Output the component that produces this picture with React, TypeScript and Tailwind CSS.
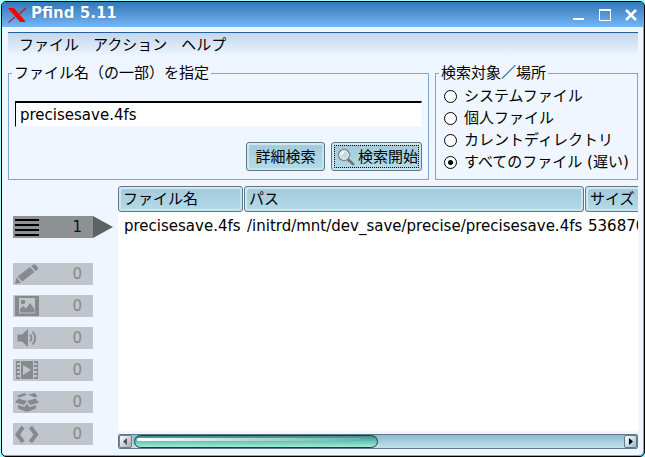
import React, { useState } from 'react';

const menus = ['ファイル', 'アクション', 'ヘルプ'];

const places = ['システムファイル', '個人ファイル', 'カレントディレクトリ', 'すべてのファイル (遅い)'];

const columns = [
  { name: 'ファイル名', width: 'w-[126px]' },
  { name: 'パス', width: 'w-[341px]' },
  { name: 'サイズ', width: 'w-[100px]' },
];

const files = [
  { name: 'precisesave.4fs', path: '/initrd/mnt/dev_save/precise/precisesave.4fs', size: '536870' },
];

const buttonLook =
  'rounded-[3px] border border-[#5d7688] bg-linear-to-b from-[#a0c9db] to-[#b4dbe7] shadow-[inset_2px_2px_1px_#d3e9f1,inset_-2px_-2px_1px_#c4e6ef]';

const PencilIcon = () => (
  <svg className="w-6 h-[22px]" viewBox="0 0 24 22" fill="currentColor">
    <path d="m0 21 1.500-6.500L6 19.500Z" />
    <path d="M2.500 13.500 15 4l4.300 5L7.300 18.600Z" />
    <path d="m16.300 3.100 2.200-1.700q1-.7 2 .4l2.300 2.800q.7 1-.2 1.800l-2.100 1.800Z" />
  </svg>
);

const PictureIcon = () => (
  <svg className="w-6 h-[22px]" viewBox="0 0 24 22" fill="currentColor">
    <path fillRule="evenodd" d="M0 1h24v20H0ZM4 3v15.500h16V3Z" />
    <path d="M5 17.500V14l3-3 3 2.500L15 8l4.500 6v3.500Z" />
    <circle cx="8" cy="7" r="2.300" />
  </svg>
);

const SoundIcon = () => (
  <svg className="w-6 h-[22px]" viewBox="0 0 24 22" fill="none" stroke="currentColor" strokeWidth="1.800">
    <path fill="currentColor" stroke="none" d="M2.500 7.500H7l6-5.500v18l-6-5.500H2.500Z" />
    <path d="M15 7.500q3 3.500 0 7M17.500 4.500q5.500 6.500 0 13" />
  </svg>
);

const FilmIcon = () => (
  <svg className="w-6 h-[22px]" viewBox="0 0 24 22" fill="currentColor">
    <path fillRule="evenodd" d="M6 2h12v18H6ZM8 6v10l8-5Z" />
    <path d="M1 2h4v2H1ZM1 6h4v2H1ZM1 10h4v2H1ZM1 14h4v2H1ZM1 18h4v2H1ZM19 2h4v2h-4ZM19 6h4v2h-4ZM19 10h4v2h-4ZM19 14h4v2h-4ZM19 18h4v2h-4Z" />
    <path d="M1 2h1v18H1ZM22 2h1v18h-1Z" />
  </svg>
);

const BoxIcon = () => (
  <svg className="w-6 h-[22px]" viewBox="0 0 24 22" fill="currentColor">
    <path d="M2 4.500 10 2l1.500 2L4 6.500ZM13 3.500 20 2l2.500 3.500-2.500 1Z" />
    <path d="M3.500 7.500 12 10l-3 4-9-2.500ZM20.500 7.500 12 10l3.500 4 8.500-2.500Z" />
    <path d="M3 14v3.500l9 3.500 9-3.500V14l-6.500 2L12 12.500 9.500 16Z" />
  </svg>
);

const CodeIcon = () => (
  <svg className="w-6 h-[22px]" viewBox="0 0 24 22" fill="none" stroke="currentColor" strokeWidth="4">
    <path d="M8 4 2.500 11.500 8 19M15.500 4l5.500 7.500-5.500 7.500" />
  </svg>
);

const filters = [
  { label: '文書', Icon: PencilIcon },
  { label: '画像', Icon: PictureIcon },
  { label: '音声', Icon: SoundIcon },
  { label: '動画', Icon: FilmIcon },
  { label: 'パッケージ', Icon: BoxIcon },
  { label: 'コード', Icon: CodeIcon },
];

const TitleBar = () => (
  <header className="flex items-center h-[25px] pl-[5px] bg-linear-to-b from-[#3178b8] to-[#74b6f6] text-white">
    <svg className="w-5 h-4 shrink-0" viewBox="0 0 20 16">
      <path fill="#ff0000" d="M1 1h6l12 14h-6Z" />
      <path stroke="#d3122c" strokeWidth="1.300" d="M19 1 12.500 7M8 10l-6.500 5.500" />
    </svg>
    <h1 className="ml-1 pb-1 text-[15px] leading-5 font-bold text-shadow-[0_0_1px_#1d4f80]">Pfind 5.11</h1>
    <div className="flex gap-[2px] ml-auto">
      <button aria-label="最小化" className="w-6 h-6">
        <svg viewBox="0 0 24 24" stroke="#fff" strokeWidth="2"><path d="M5 16h11" /></svg>
      </button>
      <button aria-label="最大化" className="w-6 h-6">
        <svg viewBox="0 0 24 24" fill="none" stroke="#fff">
          <path d="M5.500 7v10.500h11V7" /><path strokeWidth="2" d="M5 7h12" />
        </svg>
      </button>
      <button aria-label="閉じる" className="w-6 h-6">
        <svg viewBox="0 0 24 24" stroke="#fff" strokeWidth="2.500"><path d="m6 7 10 10M16 7 6 17" /></svg>
      </button>
    </div>
  </header>
);

const SearchForm = () => {
  const [query, setQuery] = useState('precisesave.4fs');

  return (
    <fieldset className="grow min-w-0 px-[6px] pb-2 border border-[#7aa5dd]">
      <legend className="-ml-[3px] px-[2px]">
        <label htmlFor="query">ファイル名（の一部）を指定</label>
      </legend>
      <input
        id="query"
        value={query}
        onChange={(e) => setQuery(e.target.value)}
        className="block w-full h-[26px] mt-[19px] pl-1 bg-white border border-t-2 border-[#f4f6fb] border-t-black border-l-black outline-none"
      />
      <div className="flex justify-end gap-[6px] mt-[15px]">
        <button className={`w-[79px] h-[29px] ${buttonLook}`}>詳細検索</button>
        <button className={`w-[91px] h-[29px] p-[2px] ${buttonLook}`}>
          <span className="flex items-center justify-between h-full pl-[2px] border border-dotted border-black">
            <svg className="w-[18px] h-[18px]" viewBox="0 0 18 18">
              <path d="m10.500 11 5.500 5" stroke="#777" strokeWidth="3" strokeLinecap="round" />
              <circle cx="7" cy="7" r="5.500" fill="#c4dce6" stroke="#858b8e" strokeWidth="1.500" />
              <circle cx="7" cy="7" r="4.300" fill="none" stroke="#eef4f6" />
              <path d="M4.500 7q0-2.500 2.500-3" fill="none" stroke="#fff" strokeWidth="1.500" />
            </svg>
            検索開始
          </span>
        </button>
      </div>
    </fieldset>
  );
};

const PlacePicker = () => {
  const [place, setPlace] = useState(places[3]);

  return (
    <fieldset className="shrink-0 w-[203px] pl-2 pb-[5px] border border-[#7aa5dd]">
      <legend className="-ml-[5px] px-[2px]">検索対象／場所</legend>
      <div className="pt-[3px]">
        {places.map((p) => (
          <label key={p} className="flex items-center gap-[7px] h-[22px] whitespace-nowrap">
            <input
              type="radio"
              name="place"
              checked={place === p}
              onChange={() => setPlace(p)}
              className="appearance-none shrink-0 w-[13px] h-[13px] rounded-full border border-black bg-white checked:bg-[radial-gradient(circle,#000_0_2px,#fff_3px)]"
            />
            {p}
          </label>
        ))}
      </div>
    </fieldset>
  );
};

const Sidebar = () => (
  <nav className="shrink-0 w-[100px] mt-[30px]">
    <button aria-label="すべて" className="flex items-center h-[22px] text-[#111]">
      <span className="flex items-center justify-between w-20 h-full pl-[2px] pr-[11px] bg-[#8e9194]">
        <svg className="w-6 h-[22px]" viewBox="0 0 24 22" stroke="#000" strokeWidth="2">
          <path d="M0 4h24M0 9h24M0 14h24M0 19h24" />
        </svg>
        1
      </span>
      <svg className="w-5 h-[22px]" viewBox="0 0 20 22"><path fill="#5f6265" d="m0 0 20 11L0 22Z" /></svg>
    </button>
    <div className="flex flex-col gap-[10px] mt-[25px]">
      {filters.map(({ label, Icon }) => (
        <button
          key={label}
          aria-label={label}
          className="flex items-center justify-between w-20 h-[22px] pl-[2px] pr-[11px] bg-[#c0c4cb] text-[#86898e]"
        >
          <Icon />
          0
        </button>
      ))}
    </div>
  </nav>
);

const ScrollBar = () => (
  <div className="flex items-center h-[15px] mt-[3px] border border-[#63798a] rounded-[2px] bg-linear-to-b from-[#8fb9cf] to-[#bfe3ec]">
    <button aria-label="左へ" className="w-[13px] h-[13px] rounded-[2px] border border-[#777e88] bg-linear-to-br from-white to-[#a9a9ad]">
      <svg viewBox="0 0 11 11"><path fill="#3c5576" d="M7 2v7L3 5.500Z" /></svg>
    </button>
    <div className="grow px-[2px]">
      <div className="w-1/2 h-[13px] rounded-full border border-[#153f40] bg-linear-to-b from-[#3d8d8a] via-[#6cc4b8] to-[#a0eccf]">
        <div className="h-[3px] mt-[2px] ml-[2px] mr-4 rounded-full bg-linear-to-r from-white to-[#62b5aa]"></div>
      </div>
    </div>
    <button aria-label="右へ" className="w-[13px] h-[13px] rounded-[2px] border border-[#63798a] bg-linear-to-br from-white to-[#8fc0d2]">
      <svg viewBox="0 0 11 11"><path fill="#000" d="M4 2v7l4-3.500Z" /></svg>
    </button>
  </div>
);

const Results = () => (
  <div className="grow min-w-0 flex flex-col">
    <div className="grow overflow-hidden bg-white">
      <table className="table-fixed w-[567px] border-collapse text-left whitespace-nowrap">
        <thead>
          <tr>
            {columns.map((c) => (
              <th key={c.name} className={`p-0 font-normal ${c.width}`}>
                <div className={`h-[26px] mr-px pl-1 leading-6 ${buttonLook}`}>{c.name}</div>
              </th>
            ))}
          </tr>
        </thead>
        <tbody>
          {files.map((f) => (
            <tr key={f.path} className="h-[28px]">
              <td className="p-0 pl-[6px]">{f.name}</td>
              <td className="p-0 pl-[3px]">{f.path}</td>
              <td className="p-0 pl-[3px]">{f.size}</td>
            </tr>
          ))}
        </tbody>
      </table>
    </div>
    <ScrollBar />
  </div>
);

const App: React.FC = () => {
  return (
    <div className="flex flex-col min-h-screen pt-px pl-px bg-[#a5ffff] text-[15px] leading-[18px] text-black font-['DejaVu_Sans','Noto_Sans_CJK_JP',sans-serif]">
      <main className="grow flex flex-col border border-black rounded-[5px] overflow-hidden bg-[#eff6ff] shadow-[inset_-1px_-1px_0_#63acf7]">
        <TitleBar />
        <div className="grow flex flex-col mt-[5px] mx-[6px] pb-[7px] border-t border-[#245f9b]">
          <nav className="flex gap-[14px] h-[31px] pt-[3px] pl-[11px] bg-linear-to-b from-[#c3d6ee] to-[#eff6ff] to-75%">
            {menus.map((m) => (
              <button key={m} className="h-[18px]">{m}</button>
            ))}
          </nav>
          <div className="flex gap-[6px]">
            <SearchForm />
            <PlacePicker />
          </div>
          <div className="grow flex gap-[5px] mt-[6px] pl-[5px]">
            <Sidebar />
            <Results />
          </div>
        </div>
      </main>
    </div>
  );
};

export default App;
